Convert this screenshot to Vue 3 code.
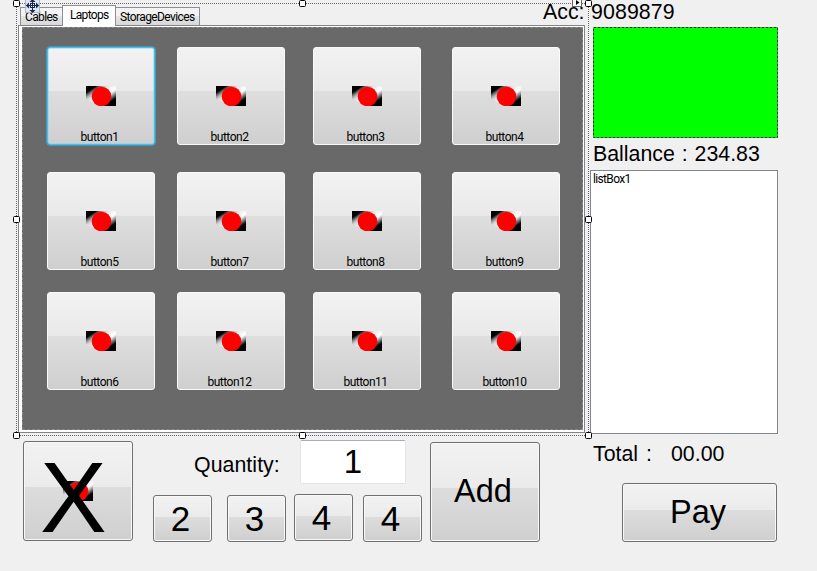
<script setup>
const products = ['button1', 'button2', 'button3', 'button4', 'button5', 'button7', 'button8', 'button9', 'button6', 'button12', 'button11', 'button10']
const handles = [[16, 3], [302, 3], [588, 3], [16, 219], [588, 219], [16, 435], [302, 435], [588, 435]]
</script>

<template>
  <div class="form">
    <svg class="defs" width="0" height="0">
      <defs>
        <linearGradient id="shade" x1="0" y1="0" x2="18.46" y2="27.7" gradientUnits="userSpaceOnUse">
          <stop offset="0" stop-color="#000" />
          <stop offset=".17" stop-color="#000" />
          <stop offset=".38" stop-color="#ddd" stop-opacity=".3" />
          <stop offset=".46" stop-color="#fff" stop-opacity=".5" />
          <stop offset=".58" stop-color="#fff" stop-opacity=".9" />
          <stop offset=".8" stop-color="#000" />
          <stop offset="1" stop-color="#000" />
        </linearGradient>
        <symbol id="record" viewBox="0 0 30 20">
          <path d="M0 0H30V20H15L0 13Z" fill="url(#shade)" />
          <circle cx="15.5" cy="10.5" r="9.8" fill="#f00" />
        </symbol>
      </defs>
    </svg>

    <main class="left">
      <nav class="tabs">
        <div class="tab cables">Cables</div>
        <div class="tab active">Laptops</div>
        <div class="tab storage">StorageDevices</div>
      </nav>
      <section class="page">
        <div class="products">
          <button v-for="(name, i) in products" :key="name" class="product" :class="{ focused: i === 0 }">
            <svg class="icon" width="30" height="20"><use href="#record" /></svg>
            <span>{{ name }}</span>
          </button>
        </div>
      </section>
      <section class="controls">
        <button class="btn clear">
          <svg class="icon" width="30" height="20"><use href="#record" /></svg>
          <span class="cross">X</span>
        </button>
        <div class="middle">
          <div class="quantity">
            <label>Quantity:</label>
            <div class="box">1</div>
          </div>
          <div class="digits">
            <button class="btn digit">2</button>
            <button class="btn digit">3</button>
            <button class="btn digit raised">4</button>
            <button class="btn digit">4</button>
          </div>
        </div>
        <button class="btn add">Add</button>
      </section>
    </main>

    <aside class="right">
      <div class="account"><span>Acc:</span><span>9089879</span></div>
      <div class="panel">
        <svg width="185" height="111"><rect x=".5" y=".5" width="184" height="110" fill="#0f0" stroke="#064806" stroke-dasharray="3 1" /></svg>
      </div>
      <div class="balance">Ballance : 234.83</div>
      <div class="list">listBox1</div>
      <div class="total"><span>Total :</span><span>00.00</span></div>
      <button class="btn pay">Pay</button>
    </aside>

    <svg class="selection" width="817" height="571">
      <g stroke="#666" stroke-dasharray="1 1" fill="none">
        <path d="M16 3.5H589M16 435.5H589M16.5 3V436M588.5 3V436" />
      </g>
      <g fill="#f8f8f8" stroke="#666">
        <rect x="572.5" y="-3.5" width="9" height="10" />
        <path d="M576 0V5L579.5 2.5Z" fill="#000" stroke="none" />
      </g>
      <rect x="25.5" y="-2.5" width="14" height="15" fill="#dce5f5" fill-opacity=".8" stroke="#a9b8d5" />
      <path d="M32.5 0V12M26.5 5.5H38.5" stroke="#182848" fill="none" />
      <path d="M32.5 -1L35.5 2H29.5ZM32.5 13L29.5 10H35.5ZM26 5.5L29 2.5V8.5ZM39 5.5L36 2.5V8.5Z" fill="#182848" />
      <rect x="30.5" y="3.5" width="4" height="4" fill="#fff" stroke="#182848" />
      <path d="M32.5 3V8M30 5.5H35" stroke="#182848" />
      <rect v-for="([x, y], i) in handles" :key="i" :x="x - 2.5" :y="y - 2.5" width="6" height="6" rx="1" fill="#fff" stroke="#000" />
    </svg>
  </div>
</template>

<style>
body { margin: 0; overflow: hidden; }
</style>

<style scoped>
.form {
  position: relative;
  display: flex;
  width: 817px;
  height: 571px;
  overflow: hidden;
  background: #f0f0f0;
  color: #000;
  font-family: "Liberation Sans", Arial, sans-serif;
  font-size: 21.33px;
  line-height: 24px;
  white-space: nowrap;
}
.form * { box-sizing: border-box; }
.defs { position: absolute; }
button { font-family: inherit; color: #000; padding: 0; margin: 0; display: flex; align-items: center; justify-content: center; }
.left { width: 590px; flex: none; padding: 5px 0 0 18px; }
.tabs { display: flex; align-items: flex-end; height: 20px; padding-left: 2px; font-family: Roboto, sans-serif; font-size: 12px; line-height: 16px; }
.tab { height: 18px; border: 1px solid #8c8e94; border-bottom: 0; background: linear-gradient(#f3f3f3 0 50%, #e4e4e4 50%, #d8d8d8); padding: 1px 0 0 4px; letter-spacing: -.65px; }
.cables { width: 42px; padding-left: 4px; border-right: 0; }
.active { width: 54px; height: 21px; margin-bottom: -1px; background: #fff; padding: 1px 0 0 7px; letter-spacing: -.7px; }
.storage { width: 84px; border-left: 0; letter-spacing: -.6px; }
.page { width: 567px; height: 408px; border: 1px solid #82838b; background: #fff; padding: 1px 1px 2px 3px; }
.products {
  width: 561px;
  height: 403px;
  border: 1px dashed #888;
  background: #696969;
  padding: 19px 0 0 24px;
  display: grid;
  grid-template-columns: 130px 136px 139px 108px;
  grid-template-rows: 125px 120px 98px;
}
.product {
  position: relative;
  width: 108px;
  height: 98px;
  border: 1px solid #fafafa;
  border-radius: 3px;
  background: linear-gradient(#f2f2f2, #e9e9e9 45%, #dedede 45%, #cfcfcf);
  flex-direction: column;
  justify-content: flex-start;
  padding-top: 38px;
  font-family: Roboto, sans-serif;
  font-size: 12px;
  line-height: 14px;
  letter-spacing: -.5px;
}
.product .icon { margin-right: 1px; }
.product span { margin: 24px 3px 0 0; }
.focused { border-color: #3cc3f3; box-shadow: 0 0 0 .5px #3cc3f3, inset 0 0 0 .5px #7ad6f7; }
.icon { display: block; flex: none; }
.controls { display: flex; padding: 7px 0 0 5px; }
.btn {
  flex: none;
  border: 1px solid #707070;
  border-radius: 3px;
  box-shadow: inset 0 0 0 1px #f8f8f8;
  background: linear-gradient(#f2f2f2, #ebebeb 46%, #dddddd 46%, #cfcfcf);
  font-size: 32.5px;
}
.clear { position: relative; width: 110px; height: 100px; margin-top: 1px; }
.cross { position: absolute; left: 16px; top: 6px; font-size: 100px; line-height: 98px; }
.middle { width: 297px; padding-left: 20px; }
.quantity { display: flex; padding-left: 41px; }
.quantity label { width: 106px; padding-top: 13px; font-size: 21.33px; letter-spacing: .05px; }
.box { width: 106px; height: 44px; border: 1px solid #e2e3ea; border-top-color: #abadb3; border-radius: 2px; background: #fff; font-size: 33px; line-height: 41px; text-align: center; }
.digits { display: grid; grid-template-columns: 74px 67px 69px 59px; padding-top: 11px; }
.digit { width: 59px; height: 47px; font-size: 35px; padding: 1px 4px 0 0; }
.raised { position: relative; top: -1px; }
.add { width: 110px; height: 100px; margin-top: 2px; padding: 0 4px 2px 0; }
.right { width: 188px; flex: none; }
.account { display: flex; margin-left: -47px; }
.account span:first-child { width: 48px; }
.account span:last-child { letter-spacing: .1px; }
.panel { padding: 3px 0 0 3px; height: 115px; }
.panel svg { display: block; }
.balance { height: 31px; padding: 3px 0 0 3px; word-spacing: 1px; }
.list { height: 264px; border: 1px solid #828790; background: #fff; padding: 1px 2px; font-family: Roboto, sans-serif; font-size: 12px; line-height: 15px; letter-spacing: -.65px; }
.total { display: flex; padding: 8px 0 0 3px; }
.total span:first-child { width: 78px; word-spacing: 2px; }
.pay { width: 155px; height: 59px; margin: 17px 0 0 32px; padding-right: 3px; }
.selection { position: absolute; left: 0; top: 0; pointer-events: none; }
</style>
